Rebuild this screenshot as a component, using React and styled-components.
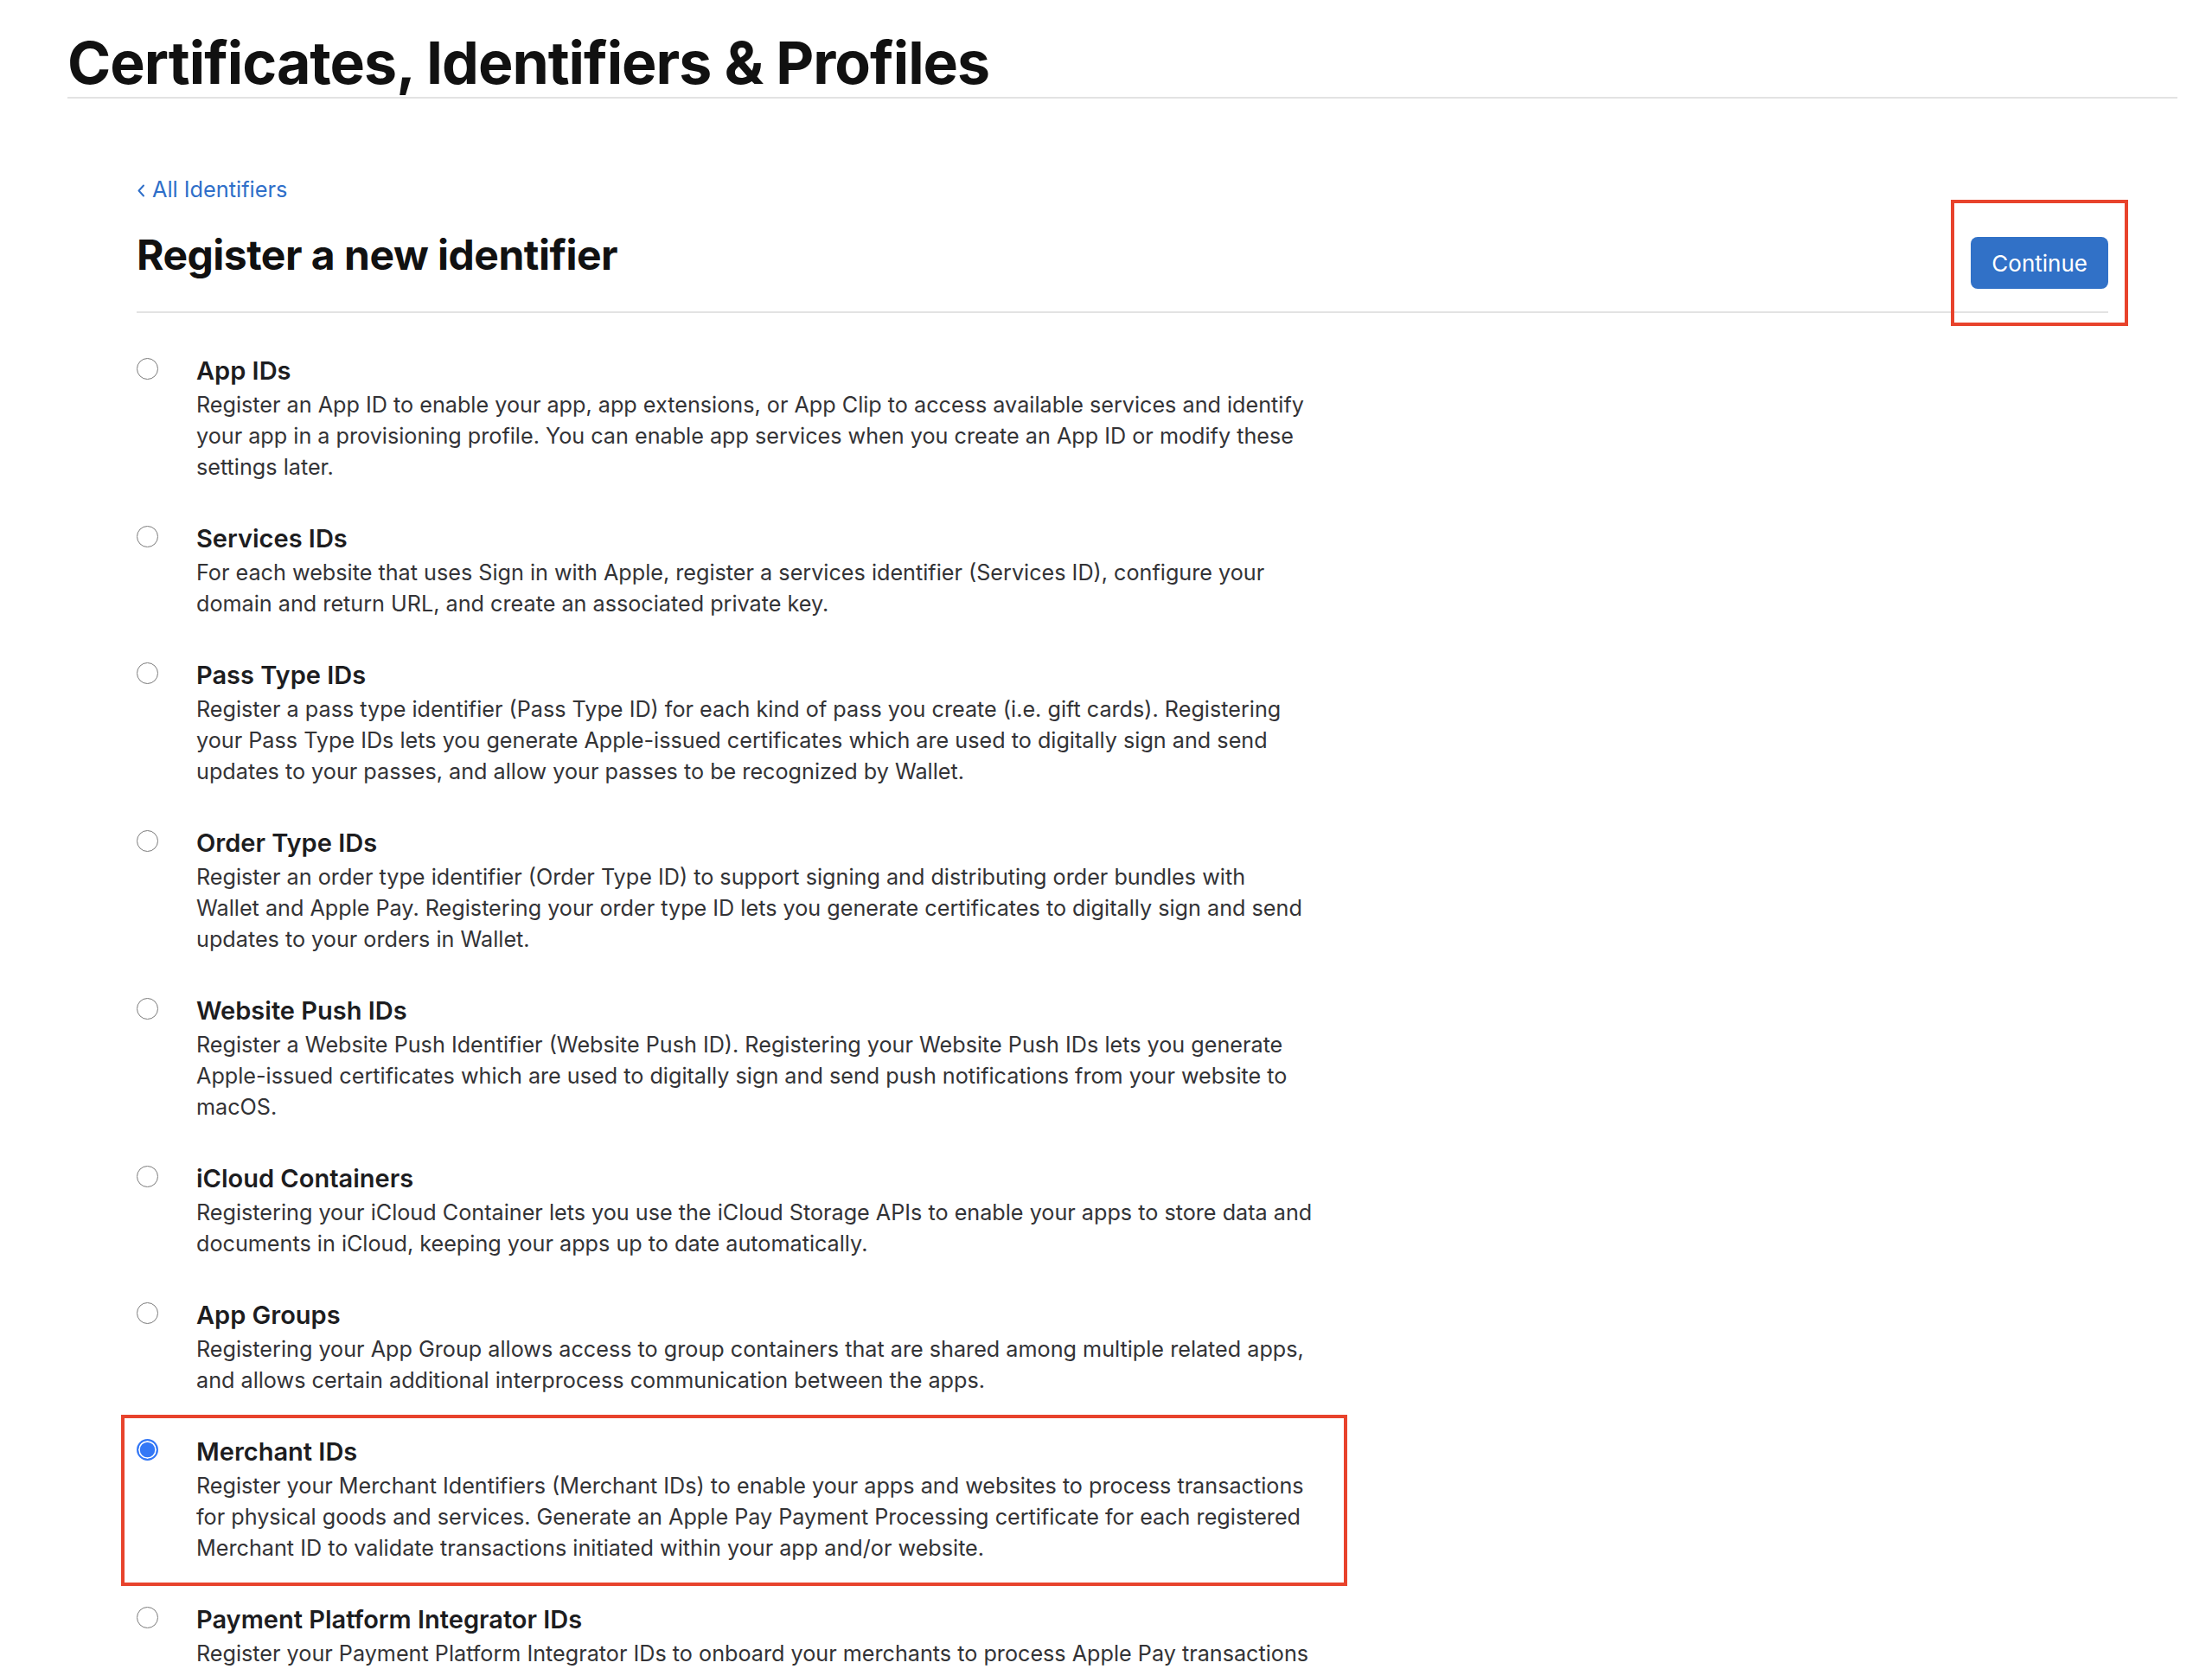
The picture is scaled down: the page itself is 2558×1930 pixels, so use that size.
import styled, { createGlobalStyle, css } from "styled-components";

const GlobalStyle = createGlobalStyle`
  body {
    margin: 0;
    background: #ffffff;
    font-family: Inter, "Noto Sans", "Liberation Sans", sans-serif;
    color: #1d1d1f;
  }
`;

// lines are kept as they break on the original page
const identifiers = [
  {
    id: "app",
    title: "App IDs",
    lines: [
      "Register an App ID to enable your app, app extensions, or App Clip to access available services and identify",
      "your app in a provisioning profile. You can enable app services when you create an App ID or modify these",
      "settings later.",
    ],
  },
  {
    id: "services",
    title: "Services IDs",
    lines: [
      "For each website that uses Sign in with Apple, register a services identifier (Services ID), configure your",
      "domain and return URL, and create an associated private key.",
    ],
  },
  {
    id: "pass",
    title: "Pass Type IDs",
    lines: [
      "Register a pass type identifier (Pass Type ID) for each kind of pass you create (i.e. gift cards). Registering",
      "your Pass Type IDs lets you generate Apple-issued certificates which are used to digitally sign and send",
      "updates to your passes, and allow your passes to be recognized by Wallet.",
    ],
  },
  {
    id: "order",
    title: "Order Type IDs",
    lines: [
      "Register an order type identifier (Order Type ID) to support signing and distributing order bundles with",
      "Wallet and Apple Pay. Registering your order type ID lets you generate certificates to digitally sign and send",
      "updates to your orders in Wallet.",
    ],
  },
  {
    id: "push",
    title: "Website Push IDs",
    lines: [
      "Register a Website Push Identifier (Website Push ID). Registering your Website Push IDs lets you generate",
      "Apple-issued certificates which are used to digitally sign and send push notifications from your website to",
      "macOS.",
    ],
  },
  {
    id: "icloud",
    title: "iCloud Containers",
    lines: [
      "Registering your iCloud Container lets you use the iCloud Storage APIs to enable your apps to store data and",
      "documents in iCloud, keeping your apps up to date automatically.",
    ],
  },
  {
    id: "groups",
    title: "App Groups",
    lines: [
      "Registering your App Group allows access to group containers that are shared among multiple related apps,",
      "and allows certain additional interprocess communication between the apps.",
    ],
  },
  {
    id: "merchant",
    title: "Merchant IDs",
    lines: [
      "Register your Merchant Identifiers (Merchant IDs) to enable your apps and websites to process transactions",
      "for physical goods and services. Generate an Apple Pay Payment Processing certificate for each registered",
      "Merchant ID to validate transactions initiated within your app and/or website.",
    ],
  },
  {
    id: "ppi",
    title: "Payment Platform Integrator IDs",
    lines: [
      "Register your Payment Platform Integrator IDs to onboard your merchants to process Apple Pay transactions",
    ],
  },
];

const selected = "merchant";

export default function App() {
  return (
    <>
      <GlobalStyle />
      <Header>
        <MainTitle>Certificates, Identifiers &amp; Profiles</MainTitle>
      </Header>
      <Main>
        <TitleRow>
          <div>
            <BackLink href="#">
              <svg width="10" height="15" viewBox="0 0 10 15">
                <polyline
                  points="8,1.5 2.5,7.5 8,13.5"
                  fill="none"
                  stroke="currentColor"
                  strokeWidth="2"
                  strokeLinecap="round"
                  strokeLinejoin="round"
                />
              </svg>
              All Identifiers
            </BackLink>
            <PageTitle>Register a new identifier</PageTitle>
          </div>
          <ActionWrap>
            <ContinueButton>Continue</ContinueButton>
          </ActionWrap>
        </TitleRow>

        <OptionList>
          {identifiers.map((item) => (
            <Option key={item.id} $marked={item.id === selected}>
              <Radio $checked={item.id === selected} />
              <div>
                <OptionTitle>{item.title}</OptionTitle>
                <OptionText>
                  {item.lines.map((line, i) => (
                    <Line key={i}>{line}</Line>
                  ))}
                </OptionText>
              </div>
            </Option>
          ))}
        </OptionList>
      </Main>
    </>
  );
}

const Header = styled.header`
  margin: 0 40px 0 78px;
  padding-top: 33px;
  border-bottom: 2px solid #e3e3e3;
`;

const MainTitle = styled.h1`
  margin: 0;
  font-size: 68px;
  line-height: 79px;
  font-weight: 700;
  letter-spacing: -1px;
  color: #111111;
`;

const Main = styled.main`
  padding: 0 120px 0 158px;
`;

const TitleRow = styled.div`
  display: flex;
  justify-content: space-between;
  align-items: flex-start;
  padding: 89px 0 26px;
  border-bottom: 2px solid #e3e3e3;
`;

const BackLink = styled.a`
  display: flex;
  align-items: center;
  gap: 8px;
  font-size: 25.3px;
  line-height: 32px;
  color: #2f6fc9;
  text-decoration: none;

  svg {
    margin-top: 2px;
  }
`;

const PageTitle = styled.h2`
  margin: 32px 0 0;
  font-size: 48px;
  line-height: 56px;
  font-weight: 700;
  letter-spacing: -0.5px;
  color: #111111;
`;

const ActionWrap = styled.div`
  position: relative;
  margin-top: 71px;

  &::after {
    content: "";
    position: absolute;
    inset: -43px -23px;
    border: 4px solid #e8432c;
    pointer-events: none;
  }
`;

const ContinueButton = styled.button`
  display: block;
  height: 60px;
  padding: 0 24px;
  border: none;
  border-radius: 8px;
  background: #3171c7;
  color: #ffffff;
  font-family: inherit;
  font-size: 26px;
  cursor: pointer;
`;

const OptionList = styled.div`
  display: flex;
  flex-direction: column;
  align-items: flex-start;
  gap: 47px;
  padding-top: 49px;
`;

const Option = styled.div`
  position: relative;
  display: grid;
  grid-template-columns: 25px 1310px;
  column-gap: 44px;

  ${(p) =>
    p.$marked &&
    css`
      &::after {
        content: "";
        position: absolute;
        top: -25px;
        bottom: -26px;
        left: -18px;
        right: -21px;
        border: 4px solid #e8432c;
        pointer-events: none;
      }
    `}
`;

const Radio = styled.span`
  box-sizing: border-box;
  width: 25px;
  height: 25px;
  margin-top: 3px;
  border-radius: 50%;
  border: 1.75px solid #7b7b7b;
  background: #ffffff;

  ${(p) =>
    p.$checked &&
    css`
      border: 2.5px solid #3478f6;
      background: #3478f6;
      box-shadow: inset 0 0 0 1.75px #ffffff;
    `}
`;

const OptionTitle = styled.div`
  font-size: 29px;
  line-height: 36px;
  font-weight: 600;
  color: #1d1d1f;
`;

const OptionText = styled.p`
  margin: 3px 0 0;
  font-size: 25.2px;
  line-height: 36px;
  color: #333336;
`;

const Line = styled.span`
  display: block;
  white-space: nowrap;
`;
